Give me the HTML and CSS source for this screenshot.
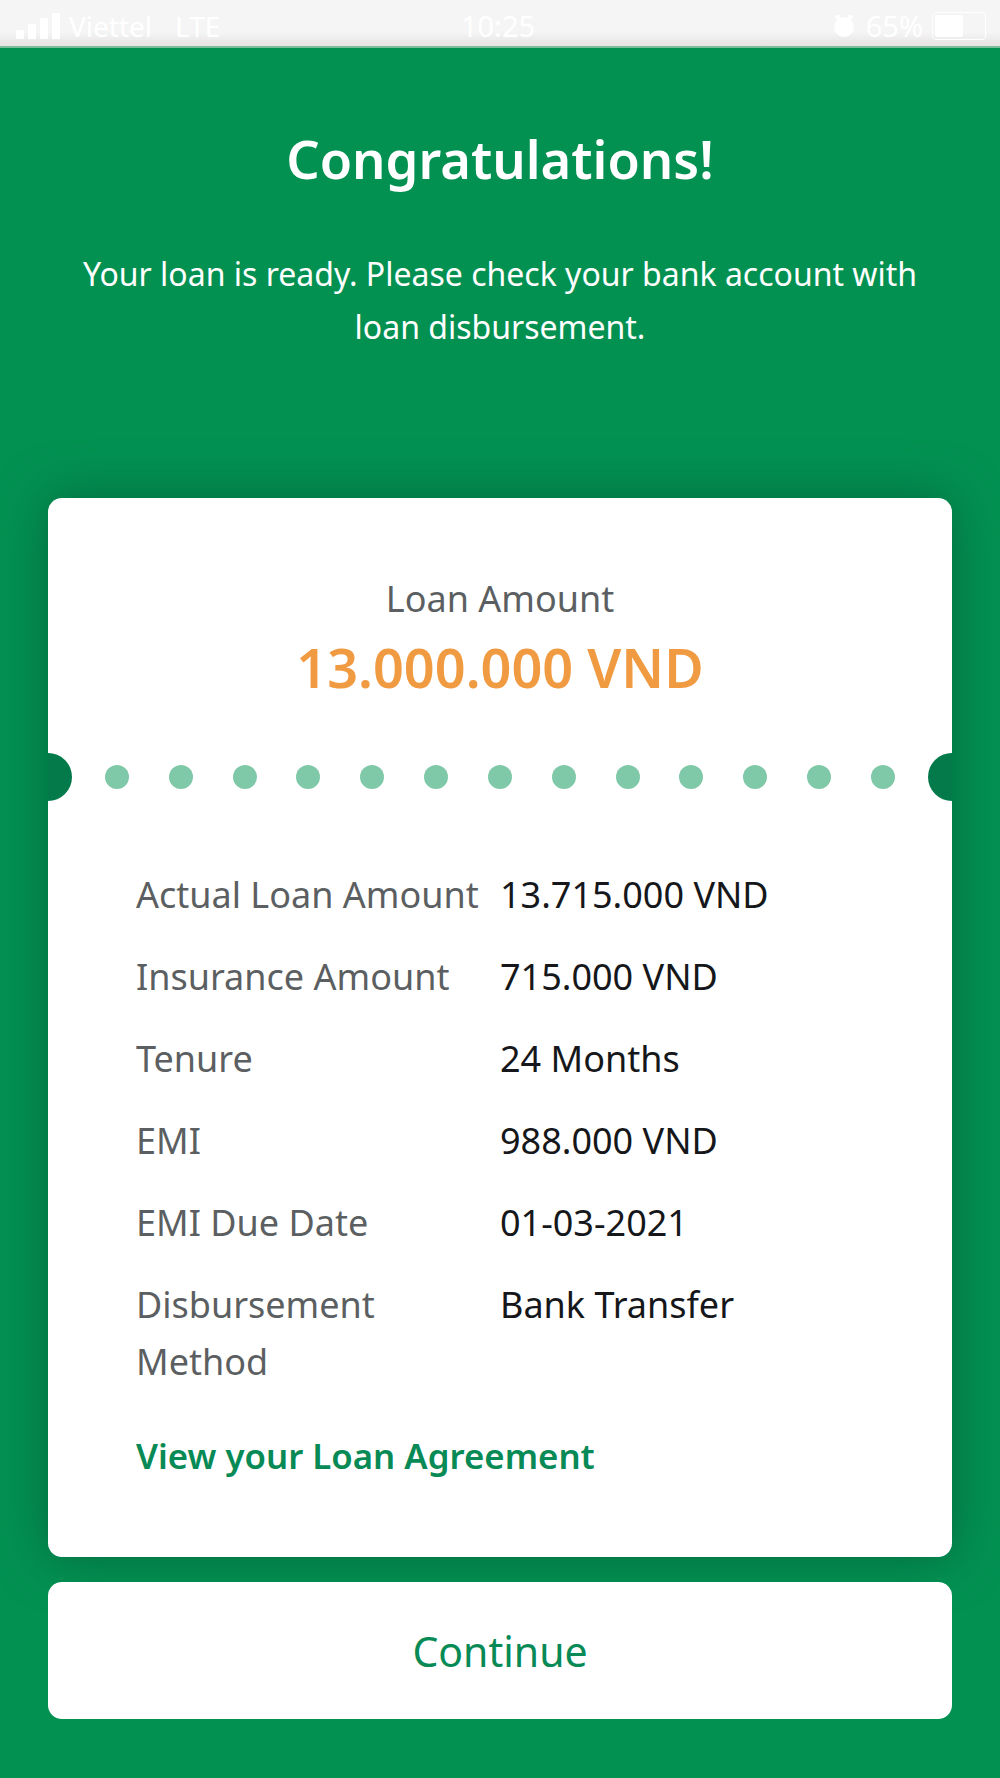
FILE: index.html
```html
<!DOCTYPE html>
<html lang="en">
<head>
  <meta charset="UTF-8" />
  <meta name="viewport" content="width=device-width, initial-scale=1.0"/>
  <title>Loan Ready</title>
  <link rel="stylesheet" href="styles.css">
</head>
<body>
  <div class="statusbar">
    <div class="status-left">
      <svg class="signal" width="44" height="26" viewBox="0 0 44 26">
        <rect x="0" y="17" width="8" height="9" rx="1"/>
        <rect x="12" y="11" width="8" height="15" rx="1"/>
        <rect x="24" y="5" width="8" height="21" rx="1"/>
        <rect x="36" y="0" width="8" height="26" rx="1"/>
      </svg>
      <span>Viettel</span>
      <span class="lte">LTE</span>
    </div>
    <div class="status-time">10:25</div>
    <div class="status-right">
      <svg class="alarm" width="22" height="24" viewBox="0 0 22 24">
        <circle cx="11" cy="13" r="10"/>
        <rect x="2" y="1" width="5" height="4" rx="2"/>
        <rect x="15" y="1" width="5" height="4" rx="2"/>
      </svg>
      <span class="percent">65%</span>
      <div class="battery"><div class="battery-level"></div></div>
    </div>
  </div>

  <div class="screen">
    <h1>Congratulations!</h1>
    <p class="lead">Your loan is ready. Please check your bank account with loan disbursement.</p>

    <div class="card">
      <div class="amount">
        <div class="amount-label">Loan Amount</div>
        <div class="amount-value">13.000.000 VND</div>
      </div>

      <div class="perforation">
        <i></i><i></i><i></i><i></i><i></i><i></i><i></i><i></i><i></i><i></i><i></i><i></i><i></i>
      </div>

      <div class="details">
        <div class="label">Actual Loan Amount</div><div class="value">13.715.000 VND</div>
        <div class="label">Insurance Amount</div><div class="value">715.000 VND</div>
        <div class="label">Tenure</div><div class="value">24 Months</div>
        <div class="label">EMI</div><div class="value">988.000 VND</div>
        <div class="label">EMI Due Date</div><div class="value">01-03-2021</div>
        <div class="label">Disbursement Method</div><div class="value">Bank Transfer</div>
      </div>

      <a class="agreement" href="#">View your Loan Agreement</a>
    </div>

    <button class="continue">Continue</button>
  </div>
</body>
</html>
```

FILE: styles.css
```css
:root {
  --green: #039152;
  --green-dark: #04794a;
  --link: #078a55;
  --orange: #f09a42;
  --muted: #5c5f61;
}
* { box-sizing: border-box; font-family: 'Noto Sans', sans-serif; }
html, body { margin: 0; height: 100%; }
body {
  width: 1000px; height: 1778px; overflow: hidden;
  background-color: var(--green);
  display: flex; flex-direction: column;
}

.statusbar {
  height: 48px; flex: none;
  padding: 9px 14px 0 16px;
  background: linear-gradient(#f5f5f5 70%, #e6e3e2);
  border-bottom: 2px solid #7fbb9d;
  color: #fff; font-size: 28px; line-height: 34px;
  display: grid; grid-template-columns: 1fr auto 1fr; align-items: start;
}
.statusbar svg { fill: #fff; flex: none; }
.status-left { display: flex; align-items: center; gap: 9px; }
.status-left .lte { margin-left: 14px; }
.status-time { font-size: 29px; margin-left: -6px; }
.status-right { display: flex; align-items: center; justify-content: flex-end; gap: 9px; }
.percent { font-size: 29px; }
.alarm { margin-right: 2px; }
.battery {
  width: 54px; height: 28px; flex: none; padding: 2px;
  border: 1px solid #fff; border-radius: 4px;
}
.battery-level { width: 28px; height: 100%; background-color: #fff; border-radius: 2px; }

.screen { flex: 1; display: flex; flex-direction: column; align-items: center; }
h1 {
  margin: 0; padding-top: 77px;
  font-size: 52.5px; line-height: 68px; font-weight: 600; color: #fff;
}
.lead {
  width: 860px; margin: 54px 0 0;
  font-size: 32px; line-height: 53px; color: #fff; text-align: center;
}

.card {
  width: 904px; height: 1059px; margin-top: 145px; flex: none;
  background-color: #fff; border-radius: 14px;
  box-shadow: 0 0 50px rgba(2, 90, 55, 0.7);
  display: flex; flex-direction: column;
}
.amount { padding-top: 78px; text-align: center; height: 255px; }
.amount-label { font-size: 36px; line-height: 46px; color: var(--muted); }
.amount-value { margin-top: 12px; font-size: 54px; line-height: 66px; font-weight: 600; color: var(--orange); }

.perforation {
  position: relative; height: 48px; flex: none;
  padding: 0 57px;
  display: flex; justify-content: space-between; align-items: center;
}
.perforation i {
  width: 24px; height: 24px; border-radius: 50%;
  background-color: #80c9a8;
}
.perforation::before, .perforation::after {
  content: ""; position: absolute; top: 0;
  width: 48px; height: 48px; border-radius: 50%;
  background-color: var(--green-dark);
}
.perforation::before { left: -24px; clip-path: inset(0 0 0 24px); }
.perforation::after { right: -24px; clip-path: inset(0 24px 0 0); }

.details {
  margin-top: 65px; padding: 0 88px;
  display: grid; grid-template-columns: 364px 1fr; row-gap: 25px;
  font-size: 36px; line-height: 57px;
}
.label { color: var(--muted); }
.value { color: #15171a; }

.agreement {
  margin: 41px 0 0 88px;
  font-size: 34.8px; line-height: 50px; font-weight: 600;
  color: var(--link); text-decoration: none;
}

.continue {
  width: 904px; height: 137px; margin-top: 25px; flex: none;
  background-color: #fff; border: 0; border-radius: 14px;
  font-size: 41px; color: var(--link);
}
```
